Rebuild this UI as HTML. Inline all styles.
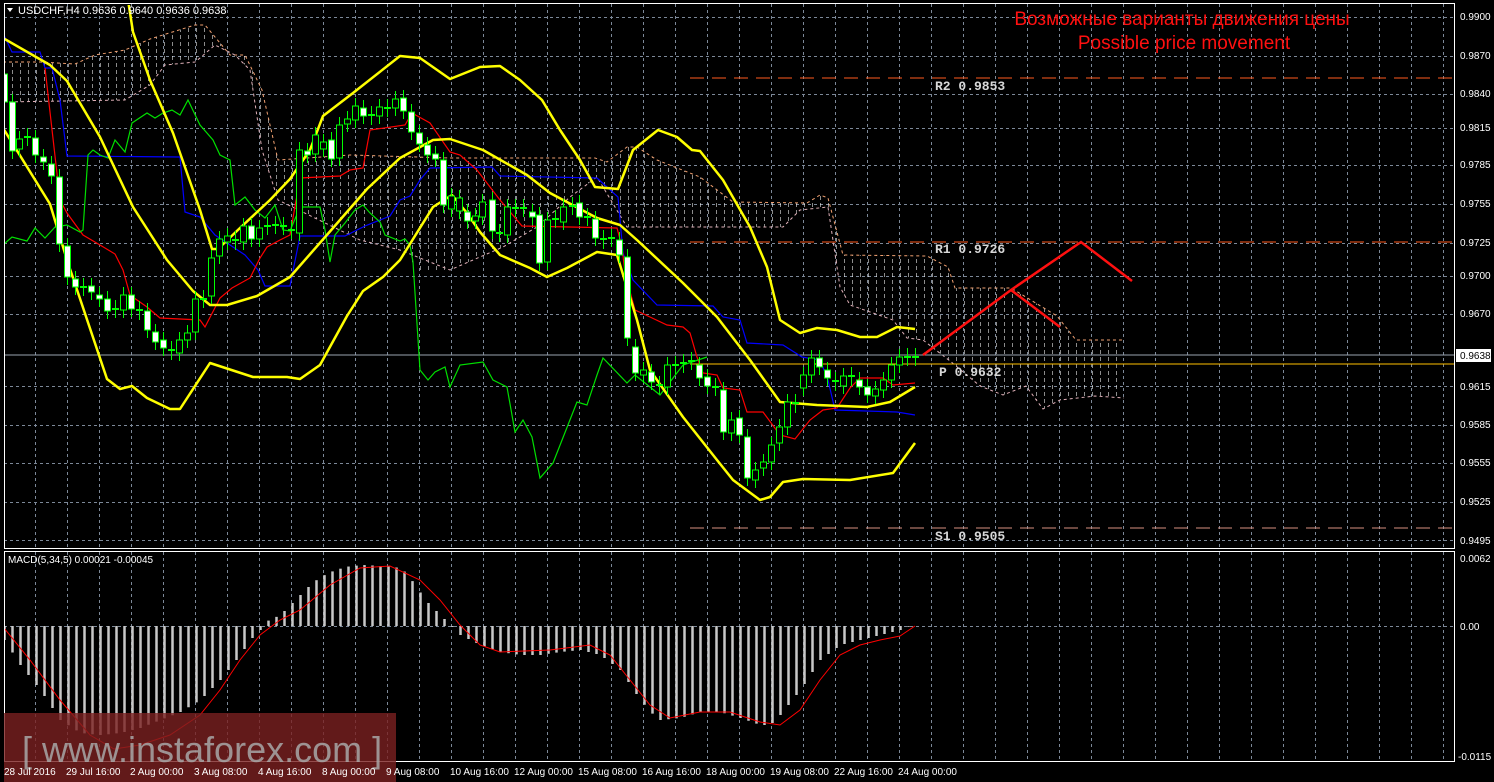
<!DOCTYPE html>
<html><head><meta charset="utf-8">
<style>
html,body{margin:0;padding:0;background:#000;overflow:hidden}
svg{display:block}
text{font-family:"Liberation Sans","DejaVu Sans",sans-serif}
text.mono{font-family:"Liberation Mono","DejaVu Sans Mono",monospace;font-weight:bold}
</style></head>
<body>
<svg id="s" width="1494" height="782" xmlns="http://www.w3.org/2000/svg">
<defs>
<pattern id="hatch" width="8" height="7" patternUnits="userSpaceOnUse">
<line x1="4.5" y1="0" x2="4.5" y2="4" stroke="#ffffff" stroke-width="1"/>
</pattern>
<clipPath id="mainclip"><rect x="5" y="5" width="1449" height="542"/></clipPath>
<clipPath id="macdclip"><rect x="5" y="552" width="1449" height="209"/></clipPath>
</defs>
<rect width="1494" height="782" fill="#000"/>
<g id="grid" stroke="#7c8898" stroke-width="1" stroke-dasharray="3,3"></g>
<g clip-path="url(#mainclip)" id="main">
<polygon fill="url(#hatch)" opacity="0.55" points="3,62 40,62 75,64 95,55 125,50 150,39 195,25 205,25 230,55 245,55 262,90 278,160 350,155 450,158 595,158 607,162 627,147 637,147 657,160 700,177 733,202 807,203 820,195 828,198 843,255 927,256 948,267 955,288 1011,288 1057,316 1076,340 1124,340 1124,398 1095,396 1060,400 1043,409 1026,386 1003,395 980,386 950,361 923,340 907,338 893,320 850,305 840,287 828,207 800,210 783,227 627,227 597,177 570,197 537,227 503,247 450,270 420,270 400,250 360,240 278,200 262,150 250,70 235,55 215,45 200,58 195,62 165,65 150,85 125,100 3,102"/>
<polyline fill="none" stroke="#f0a070" stroke-dasharray="3,3" points="3,62 40,62 75,64 95,55 125,50 150,39 195,25 205,25 230,55 245,55 262,90 278,160 350,155 450,158 595,158 607,162 627,147 637,147 657,160 700,177 733,202 807,203 820,195 828,198 843,255 927,256 948,267 955,288 1011,288 1057,316 1076,340 1124,340"/>
<polyline fill="none" stroke="#e0b0b8" stroke-dasharray="3,3" points="3,102 125,100 150,85 165,65 195,62 200,58 215,45 235,55 250,70 262,150 278,200 360,240 400,250 450,270 503,247 537,227 570,197 597,177 627,227 783,227 800,210 828,207 840,287 850,305 893,320 907,338 923,340 950,361 980,386 1003,395 1026,386 1043,409 1060,400 1095,396 1124,398"/>
<line x1="690" y1="78" x2="1454" y2="78" stroke="#ff5a1e" stroke-dasharray="14,8"/>
<line x1="690" y1="242" x2="1454" y2="242" stroke="#ff5a1e" stroke-dasharray="14,8"/>
<line x1="690" y1="528" x2="1454" y2="528" stroke="#d89080" stroke-dasharray="14,8"/>
<line x1="4" y1="355" x2="1454" y2="355" stroke="#9aa4b0"/>
<line x1="690" y1="364" x2="1454" y2="364" stroke="#ffc000"/>
<polyline fill="none" stroke="#0000ff" stroke-width="1.2" points="3,33 12,52 40,52 45,68 52,68 60,100 67,156 180,157 185,212 200,217 215,235 245,255 258,270 265,286 290,286 300,236 345,236 365,226 390,216 400,200 410,196 420,180 430,168 492,167 500,176 597,178 618,197 623,253 633,280 657,305 713,306 723,317 740,320 747,343 783,345 802,357 820,360 828,380 835,410 897,412 915,415"/>
<polyline fill="none" stroke="#ff0000" stroke-width="1.2" points="45,68 60,200 67,213 83,235 100,245 115,254 123,270 130,295 137,300 147,307 160,318 200,320 205,327 220,298 232,288 250,278 260,258 267,247 280,240 290,235 300,178 340,176 350,170 363,168 370,130 405,125 412,113 430,123 450,152 460,155 477,170 500,200 522,226 617,228 622,247 625,273 635,310 650,317 667,325 683,327 690,333 697,357 703,373 717,375 723,388 740,390 747,412 763,412 780,435 795,439 810,420 823,410 837,408 850,388 860,378 883,378 893,385 915,383"/>
<polyline fill="none" stroke="#00e000" stroke-width="1.2" points="3,245 12,237 27,241 35,228 45,238 55,227 67,225 80,232 83,230 88,155 93,150 100,155 108,158 115,140 125,152 132,123 147,113 155,118 163,113 172,110 180,115 188,100 200,125 213,140 220,155 230,160 235,205 245,197 255,210 265,218 275,205 283,230 290,231 300,207 320,207 325,230 330,262 335,235 345,223 355,210 363,205 370,213 380,222 385,235 400,241 405,239 410,245 413,262 420,370 428,380 435,372 445,367 450,387 460,365 483,362 493,380 507,387 515,432 523,420 532,437 540,478 553,463 577,402 587,405 597,375 603,358 627,383 635,375 660,395 683,365 707,357"/>
<g fill="none" stroke="#ffff00" stroke-width="2.5" stroke-linejoin="round">
<polyline points="128,0 133,32 150,80 173,133 200,210 212,249 218,249 240,228 270,200 290,179 310,150 323,116 353,93 400,56 420,58 450,79 480,67 500,66 520,80 542,100 560,130 580,160 595,187 618,189 633,150 658,130 677,137 692,150 700,151 723,180 750,227 767,267 780,320 800,333 817,328 837,330 860,337 877,337 897,327 915,329"/>
<polyline points="3,38 50,65 67,81 100,137 133,207 167,260 193,291 210,305 227,305 257,296 290,277 333,228 367,189 400,158 433,140 450,139 483,150 527,175 550,193 597,218 620,225 637,240 683,283 717,317 750,360 780,402 817,405 867,407 890,402 915,387"/>
<polyline points="3,128 50,204 67,260 107,379 120,389 132,386 147,398 170,409 180,409 210,363 253,377 287,377 300,379 320,365 347,316 363,291 383,277 400,260 433,207 452,195 467,213 480,232 500,255 530,268 547,277 567,268 597,252 617,255 637,320 650,370 683,417 717,460 733,480 760,500 770,497 783,482 803,479 850,480 893,473 915,443"/>
</g>
<g id="candles"></g>
<g fill="none" stroke="#ff1010" stroke-width="2.5">
<polyline points="923,355 1011,290 1081,242 1132,281"/>
<polyline points="1011,290 1060,327"/>
</g>
</g>
<rect x="4.5" y="3.5" width="1450" height="545" fill="none" stroke="#fff"/>
<rect x="4.5" y="551.5" width="1450" height="210" fill="none" stroke="#fff"/>
<g id="macd" clip-path="url(#macdclip)"></g>
<polyline clip-path="url(#macdclip)" fill="none" stroke="#ff0000" stroke-width="1" points="4,628 30,660 60,700 90,735 114,749 140,745 170,735 200,715 220,690 240,660 260,635 280,620 300,610 330,585 360,568 390,566 420,580 440,600 460,625 480,645 500,652 550,650 590,645 610,655 630,680 650,705 670,718 700,712 730,712 760,722 780,725 800,710 820,680 840,655 860,645 880,640 900,636 915,626"/>
<polygon points="7,8 13,8 10,12" fill="#fff"/>
<text x="18" y="14" fill="#fff" font-size="11">USDCHF,H4  0.9636 0.9640 0.9636 0.9638</text>
<text x="1182" y="25" fill="#ff1010" font-size="19" text-anchor="middle">Возможные варианты движения цены</text>
<text x="1184" y="49" fill="#ff1010" font-size="19" text-anchor="middle">Possible price movement</text>
<g font-size="13" fill="#d8d8d8">
<text class="mono" x="935" y="90">R2 0.9853</text>
<text class="mono" x="935" y="253">R1 0.9726</text>
<text class="mono" x="939" y="376">P 0.9632</text>
<text class="mono" x="935" y="540">S1 0.9505</text>
</g>
<text x="8" y="563" fill="#fff" font-size="10">MACD(5,34,5) 0.00021 -0.00045</text>
<g fill="#fff" font-size="10">
<text x="1460" y="20">0.9900</text><text x="1460" y="59">0.9870</text><text x="1460" y="97">0.9840</text>
<text x="1460" y="131">0.9815</text><text x="1460" y="168">0.9785</text><text x="1460" y="207">0.9755</text>
<text x="1460" y="246">0.9725</text><text x="1460" y="279">0.9700</text><text x="1460" y="317">0.9670</text>
<text x="1460" y="390">0.9615</text><text x="1460" y="428">0.9585</text><text x="1460" y="466">0.9555</text>
<text x="1460" y="505">0.9525</text><text x="1460" y="544">0.9495</text>
<text x="1460" y="562">0.0062</text><text x="1460" y="630">0.00</text><text x="1458" y="760">-0.0115</text>
</g>
<rect x="1456" y="349" width="35" height="13" fill="#fff"/>
<text x="1460" y="359" fill="#000" font-size="10">0.9638</text>
<rect x="4" y="713" width="392" height="69" fill="#7a2020" opacity="0.8"/>
<text x="22" y="762" fill="#a8a8a8" font-size="36" opacity="0.85">[ www.instaforex.com ]</text>
<g fill="#fff" font-size="10">
<text x="4" y="775">28 Jul 2016</text><text x="66" y="775">29 Jul 16:00</text><text x="130" y="775">2 Aug 00:00</text>
<text x="194" y="775">3 Aug 08:00</text><text x="258" y="775">4 Aug 16:00</text><text x="322" y="775">8 Aug 00:00</text>
<text x="386" y="775">9 Aug 08:00</text><text x="450" y="775">10 Aug 16:00</text><text x="514" y="775">12 Aug 00:00</text>
<text x="578" y="775">15 Aug 08:00</text><text x="642" y="775">16 Aug 16:00</text><text x="706" y="775">18 Aug 00:00</text>
<text x="770" y="775">19 Aug 08:00</text><text x="834" y="775">22 Aug 16:00</text><text x="898" y="775">24 Aug 00:00</text>
</g>
</svg>
<script>
var NS="http://www.w3.org/2000/svg";
function el(p,t,a){var e=document.createElementNS(NS,t);for(var k in a)e.setAttribute(k,a[k]);p.appendChild(e);return e;}
var g=document.getElementById('grid');
for(var x=35.5;x<1454;x+=32){el(g,'line',{x1:x,y1:4,x2:x,y2:548});el(g,'line',{x1:x,y1:552,x2:x,y2:762});}
[17,56,94,128,165,204,243,276,314,386,425,463,502,540].forEach(function(y){el(g,'line',{x1:4,y1:y+.5,x2:1454,y2:y+.5});});
el(g,'line',{x1:4,y1:626.5,x2:1454,y2:626.5});
var C=[[4,74,102,1],[12,102,151,1],[19,139,149,0],[27,136,138,0],[35,138,155,1],[43,157,162,1],[51,164,176,1],[59,177,244,1],[67,246,277,1],[75,279,287,1],[83,286,288,0],[91,286,292,1],[99,295,299,1],[107,299,311,1],[115,308,310,0],[123,295,310,0],[131,295,309,1],[139,309,312,1],[147,311,330,1],[155,332,342,1],[163,340,348,1],[171,349,352,1],[179,340,353,0],[187,333,340,0],[195,299,332,0],[203,298,300,0],[211,258,296,0],[219,239,256,0],[227,236,242,0],[235,239,242,1],[243,226,242,0],[251,226,239,1],[259,228,239,0],[267,225,227,0],[275,224,226,0],[283,225,227,0],[291,229,231,0],[299,150,233,0],[307,151,155,1],[315,135,154,0],[323,142,149,0],[331,140,159,1],[339,125,158,0],[347,119,124,0],[355,106,120,0],[363,108,116,1],[371,114,117,0],[379,107,116,0],[387,107,109,1],[395,99,108,0],[403,98,111,1],[411,112,132,1],[419,133,144,1],[427,145,155,1],[435,154,159,1],[443,160,205,1],[451,196,209,0],[459,198,211,0],[467,212,221,1],[475,216,221,0],[482,202,217,0],[492,200,231,1],[499,232,234,0],[507,207,235,0],[515,207,209,0],[523,207,209,0],[532,212,217,1],[539,215,263,1],[547,220,262,0],[555,218,220,0],[563,207,222,0],[572,205,207,0],[579,203,217,1],[587,216,218,0],[595,219,238,1],[603,238,241,1],[611,237,239,0],[619,240,255,1],[627,257,338,1],[635,347,373,1],[643,370,375,0],[651,372,382,1],[659,384,386,0],[667,365,387,0],[675,364,366,0],[683,362,365,0],[691,360,362,0],[699,365,378,1],[707,377,386,1],[715,386,388,0],[723,390,432,1],[731,420,433,0],[739,418,435,1],[747,437,478,1],[755,470,480,0],[763,462,468,0],[771,445,462,0],[779,427,443,0],[787,402,427,0],[795,402,405,1],[803,375,388,0],[811,358,375,0],[819,358,367,1],[827,370,378,1],[835,380,383,1],[843,376,386,0],[851,375,378,1],[859,380,387,1],[867,387,395,1],[875,389,396,0],[883,380,390,0],[891,365,380,0],[899,357,365,0],[907,356,358,0],[915,356,358,0]];
var cg=document.getElementById('candles');
C.forEach(function(c){var x=c[0],t=c[1],b=c[2];
el(cg,'line',{x1:x+.5,y1:t-8,x2:x+.5,y2:b+8,stroke:'#00ff00','stroke-width':1});
if(b-t<=3){el(cg,'line',{x1:x-3,y1:t+1,x2:x+4,y2:t+1,stroke:'#00ff00','stroke-width':2});}
else el(cg,'rect',{x:x-2.5,y:t,width:6,height:b-t,fill:c[3]?'#fff':'#000',stroke:'#00ff00','stroke-width':1});});
var H=[[4,640],[20,665],[40,690],[60,720],[80,733],[100,735],[120,733],[140,728],[160,720],[180,712],[200,700],[220,680],[240,655],[250,640],[260,630],[265,622],[280,615],[295,600],[310,585],[320,577],[335,570],[350,566],[365,565],[380,566],[395,567],[405,572],[415,585],[425,600],[440,615],[450,625],[460,635],[480,645],[500,652],[520,655],[540,655],[560,652],[580,650],[600,655],[620,670],[640,700],[650,712],[660,720],[680,718],[700,712],[720,712],[740,718],[760,725],[770,725],[780,715],[800,690],[820,660],[840,645],[860,640],[880,635],[900,630],[915,624]];
function hv(x){for(var i=0;i<H.length-1;i++){if(x>=H[i][0]&&x<=H[i+1][0]){var f=(x-H[i][0])/(H[i+1][0]-H[i][0]);return H[i][1]+f*(H[i+1][1]-H[i][1]);}}return 626;}
var mg=document.getElementById('macd');
for(var x=4;x<=915;x+=8){var y=hv(x);el(mg,'line',{x1:x+.5,y1:626,x2:x+.5,y2:y,stroke:'#c8c8c8','stroke-width':2.5});}
</script>
</body></html>
